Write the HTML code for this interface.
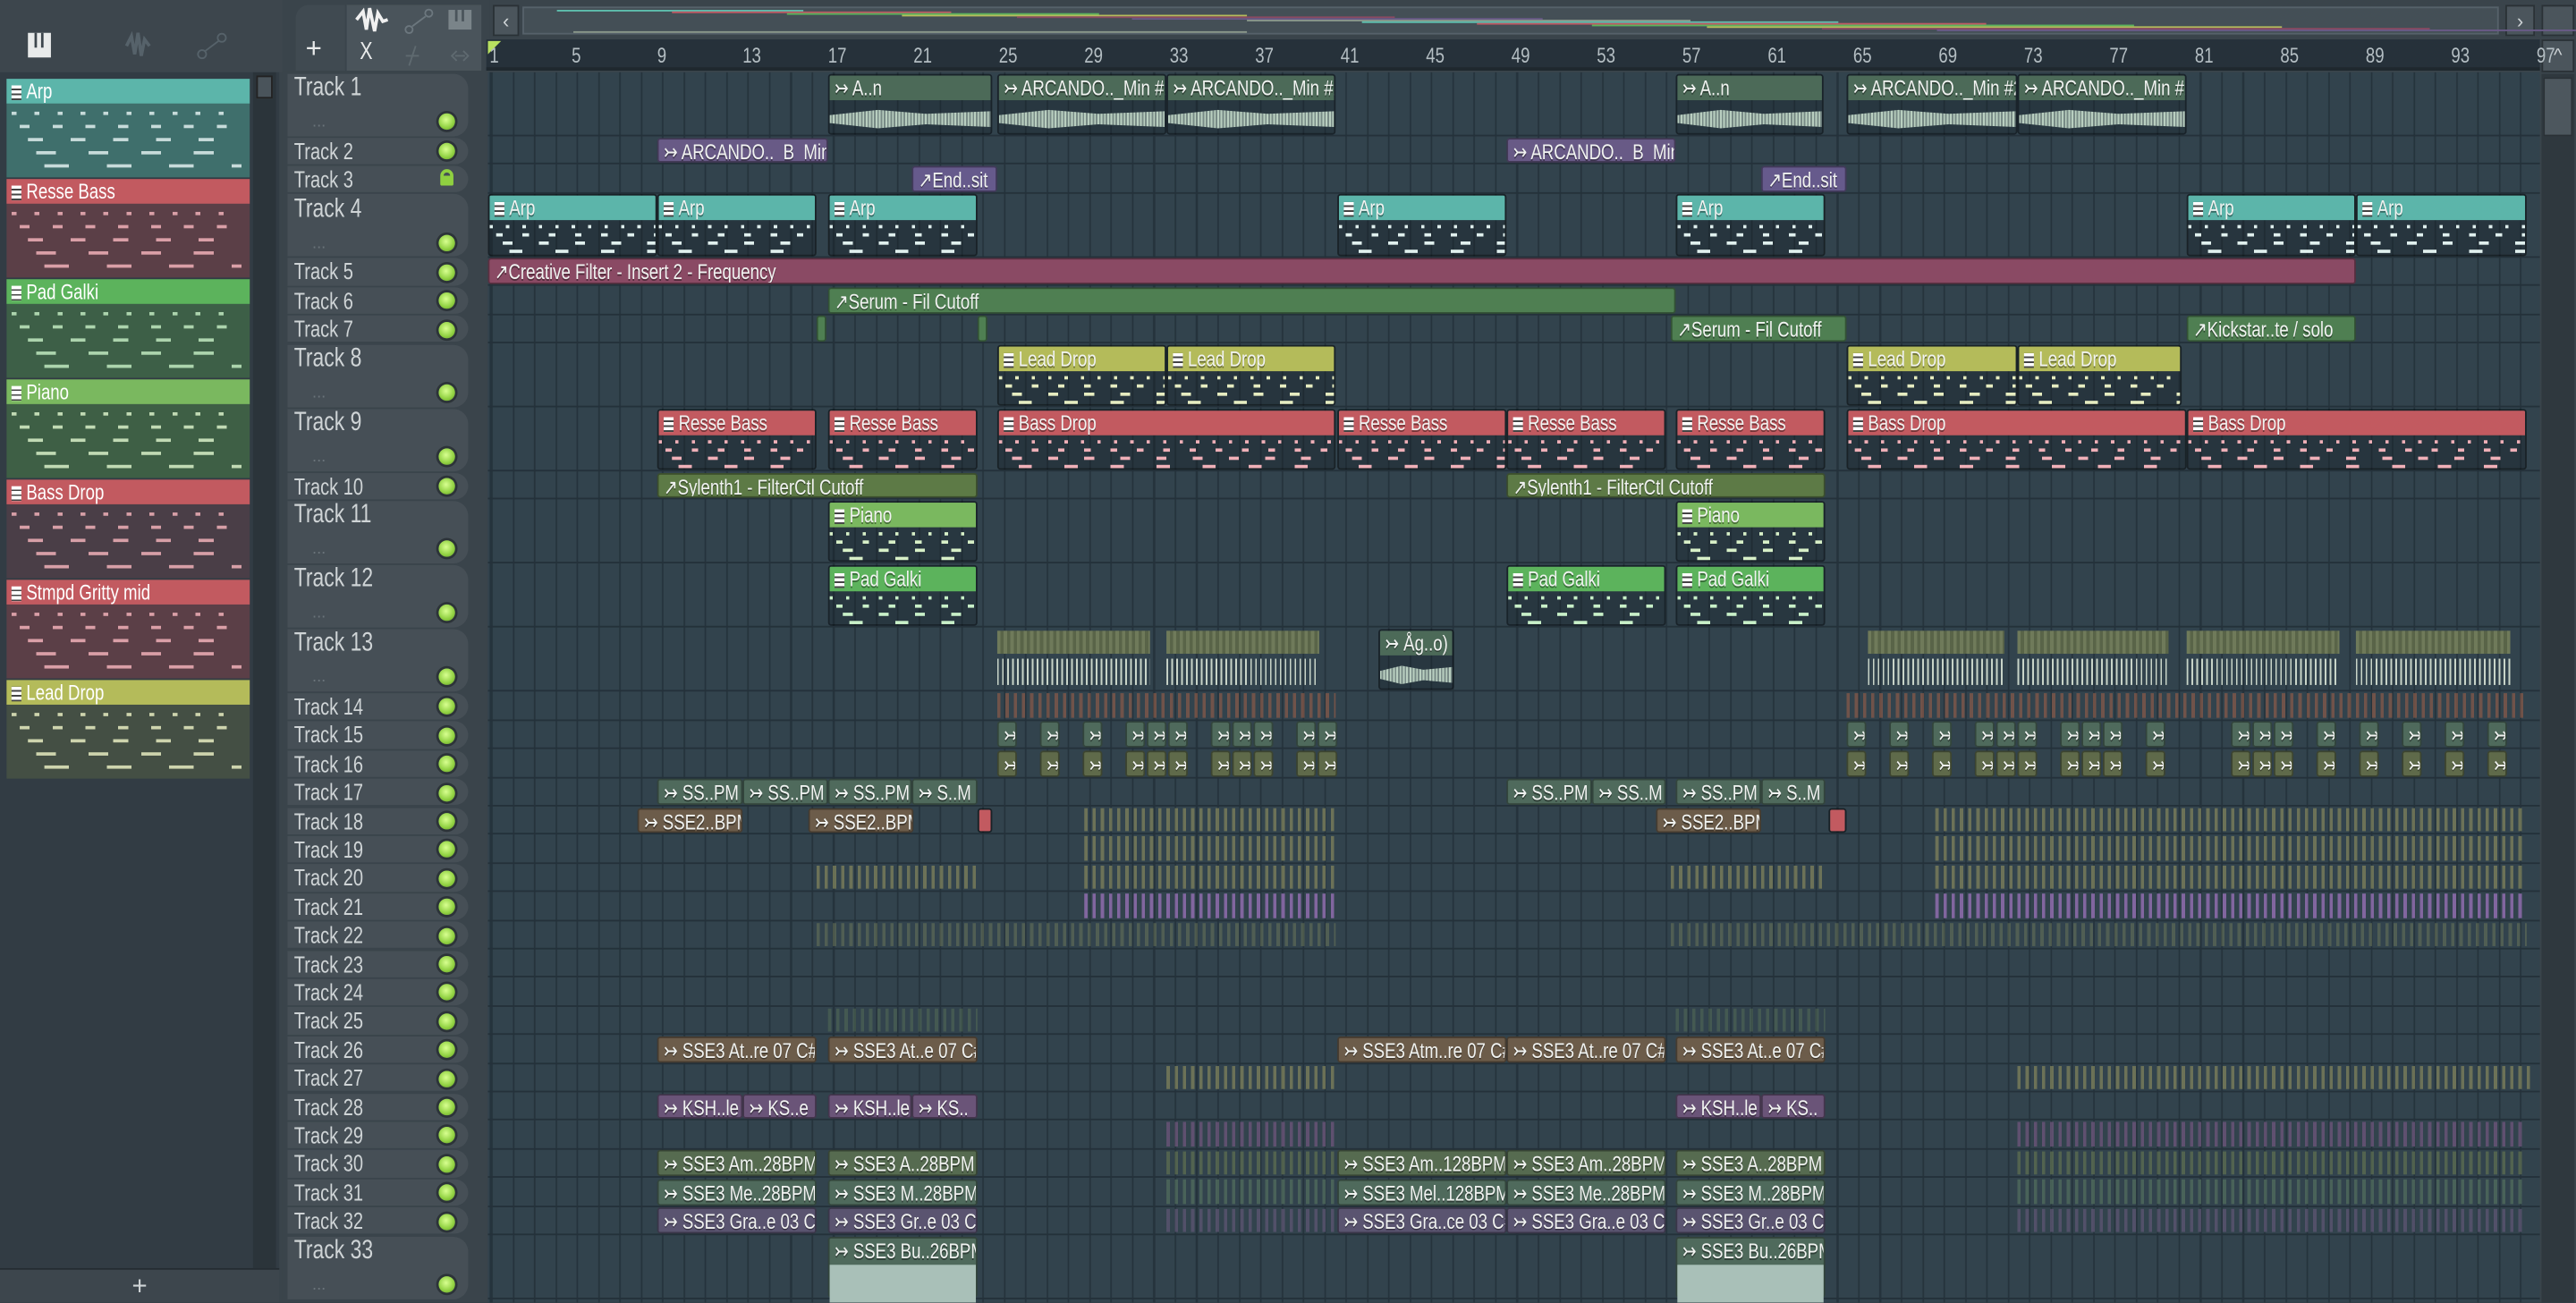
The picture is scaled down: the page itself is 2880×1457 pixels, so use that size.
<!DOCTYPE html>
<html><head><meta charset="utf-8">
<style>
html,body{margin:0;padding:0;width:2880px;height:1456px;overflow:hidden;background:#343e46;}
#s{position:absolute;left:0;top:0;width:1568px;height:793px;transform:scale(1.836735);transform-origin:0 0;background:#3a444b;font-family:"Liberation Sans",sans-serif;color:#e6eaea;overflow:hidden}
.a{position:absolute;box-sizing:border-box}
.t{display:inline-block;transform:scaleX(.78);transform-origin:0 50%;white-space:nowrap}
.tl{position:absolute;left:179px;color:#cfd4d6;white-space:nowrap}
.led{position:absolute;left:267px;width:10px;height:10px;border-radius:50%;background:radial-gradient(circle at 45% 40%,#d8ff90,#8fd040 60%,#5a8a28);box-shadow:0 0 0 1.5px #2c3338}
.c{position:absolute;box-sizing:border-box;border-radius:2px;overflow:hidden;border:1px solid rgba(0,0,0,.35)}
.h{position:absolute;left:0;right:0;top:0;height:15px;font-size:13px;line-height:15px;padding-left:3px;white-space:nowrap;overflow:hidden;color:#f0f2f0;text-shadow:0 1px 0 rgba(0,0,0,.4)}
.pi{display:inline-block;width:6px;height:9px;margin-right:3px;vertical-align:-1px;background:repeating-linear-gradient(#fff 0 2px,#444 2px 3px)}
.num{position:absolute;top:26px;font-size:13px;color:#b4bec3}
</style></head><body>
<div id="s">
<div class="a" style="left:0;top:0;width:172px;height:44px;background:#3d464d"></div>
<svg class="a" style="left:15px;top:19px" width="130" height="18">
<rect x="2" y="1" width="14" height="15" fill="#e8eaea"/><rect x="6" y="1" width="1.5" height="9" fill="#3d464d"/><rect x="10" y="1" width="1.5" height="9" fill="#3d464d"/>
<path d="M62 9 L65 3 L67 14 L69 1 L71 15 L73 5 L76 9" stroke="#56626a" stroke-width="2" fill="none"/>
<circle cx="108" cy="14" r="2.5" stroke="#56626a" fill="none"/><circle cx="120" cy="4" r="2.5" stroke="#56626a" fill="none"/><path d="M110 12 L118 6" stroke="#56626a"/>
</svg>
<div class="a" style="left:0;top:44px;width:170px;height:729px;background:#323c44"></div>
<div class="a" style="left:154px;top:44px;width:14px;height:729px;background:#2b343a"></div>
<div class="a" style="left:156px;top:46px;width:10px;height:14px;background:#4a545b;border:1px solid #222"></div>
<div class="a" style="left:0;top:772px;width:170px;height:21px;background:#3d464d;border-top:1px solid #252d33;text-align:center;font-size:16px;color:#cfd4d6;line-height:21px">+</div>
<div id="pats"></div>
<div class="a" style="left:172px;top:0;width:126px;height:44px;background:#3a444b"></div>
<div class="a" style="left:180px;top:3px;width:30px;height:40px;background:#404a51;border-radius:8px 0 0 0"></div>
<div class="a" style="left:211px;top:3px;width:82px;height:40px;background:#4a545b"></div>
<div class="a" style="left:186px;top:20px;font-size:17px;color:#e8eaea">+</div>
<div class="a" style="left:219px;top:23px;font-size:15px;color:#e8eaea"><span class="t">X</span></div>
<svg class="a" style="left:213px;top:4px" width="80" height="38">
<path d="M4 8 L8 3 L10 14 L12 1 L15 15 L17 4 L20 9 L23 8" stroke="#f0f0f0" stroke-width="2" fill="none"/>
<circle cx="36" cy="14" r="2.2" stroke="#6c777e" fill="none"/><circle cx="48" cy="4" r="2.2" stroke="#6c777e" fill="none"/><path d="M38 12 L46 6" stroke="#6c777e"/>
<rect x="60" y="2" width="14" height="12" fill="#7a8489"/><rect x="64" y="2" width="1.5" height="7" fill="#4a545b"/><rect x="68" y="2" width="1.5" height="7" fill="#4a545b"/>
<path d="M40 24 L36 36 M34 30 L42 30" stroke="#5f6a70" fill="none"/><path d="M64 30 L70 30 M65 27 L62 30 L65 33 M69 27 L72 30 L69 33" stroke="#5f6a70" fill="none"/>
</svg>
<div class="a" style="left:298px;top:0;width:1270px;height:24px;background:#3a444b"></div>
<div class="a" style="left:300px;top:3px;width:16px;height:19px;background:#4b555c;border:1px solid #2a3136;color:#cfd4d6;font-size:12px;text-align:center;line-height:18px">&lsaquo;</div>
<div class="a" style="left:1525px;top:3px;width:18px;height:19px;background:#4b555c;border:1px solid #2a3136;color:#cfd4d6;font-size:12px;text-align:center;line-height:18px">&rsaquo;</div>
<div class="a" style="left:1547px;top:3px;width:20px;height:19px;background:#4b555c;border:1px solid #2a3136"></div>
<div class="a" style="left:318px;top:4px;width:1203px;height:17px;background:#444f56;border:1px solid #56616a" id="ov"></div>
<div class="a" style="left:296px;top:24px;width:1250px;height:19px;background:#26313a;border-bottom:2px solid #1f282e"></div>
<div class="a" style="left:297px;top:25px;width:0;height:0;border-left:8px solid #b8e060;border-bottom:8px solid transparent"></div>
<div class="a" style="left:1547px;top:24px;width:20px;height:20px;background:#4b555c;border:1px solid #2a3136;color:#cfd4d6;font-size:11px;text-align:center;line-height:18px">^</div>
<div class="a" style="left:1547px;top:45px;width:20px;height:748px;background:#2f383e"></div>
<div class="a" style="left:1548px;top:47px;width:18px;height:36px;background:#4d575e;border:1px solid #2a3136"></div>
<div id="rul"></div>
<div class="a" style="left:172px;top:44px;width:124px;height:749px;background:#3a444b"></div>
<div class="a" id="pl" style="left:297px;top:44px;width:1249px;height:749px;background-color:#32434d;background-image:repeating-linear-gradient(90deg,#25333c 0 1px,transparent 1px 13px);background-position:2px 0"></div>
<div id="tr"></div>
<div id="cl"></div>
</div>
<script>
var H=[39,17.4,17.4,39,17.4,17.4,17.4,39,39,17.4,39,39,39];for(var i=0;i<19;i++)H.push(17.4);H.push(39);
var T=[],y=44;for(i=0;i<H.length;i++){T.push(y);y+=H[i];}
var tr='',k;
for(i=0;i<H.length;i++){var t=T[i],h=H[i],tall=h>20;
tr+='<div class="a" style="left:175px;top:'+(t+0.5)+'px;width:110px;height:'+(h-1)+'px;background:#464f56;border-radius:0 9px 9px 0"></div>';
tr+='<div class="a" style="left:297px;top:'+(t+h-1)+'px;width:1249px;height:1px;background:#24313a"></div>';
tr+='<div class="tl" style="top:'+(t+(tall?1:0.5))+'px;font-size:'+(tall?16:14)+'px"><span class="t">Track '+(i+1)+'</span></div>';
if(tall)tr+='<div class="a" style="left:190px;top:'+(t+h-14)+'px;font-size:10px;color:#6a747a">...</div>';
if(i==2)tr+='<div class="a" style="left:268px;top:'+(t+3)+'px;width:8px;height:10px;border:2px solid #8fd040;border-bottom:6px solid #8fd040;border-radius:4px 4px 1px 1px"></div>';
else tr+='<div class="led" style="top:'+(t+h-(tall?14:13.5))+'px"></div>';}
document.getElementById('tr').innerHTML=tr;
var r='';for(var n=1;n<=97;n+=4){var x=299+(n-1)*13;r+='<div class="num" style="left:'+(x+(n==1?-1:-3))+'px"><span class="t">'+n+'</span></div>';}
document.getElementById('rul').innerHTML=r;
var ov='',oc=['#5fc0b0','#c05a64','#5cb35c','#b6bd5c','#8a4a62','#6a5a88','#8c9a8c'];
for(i=0;i<14;i++){ov+='<div class="a" style="left:'+(20+i*70%900)+'px;top:'+(1+i)+'px;width:'+(150+i*20)+'px;height:1px;background:'+oc[i%7]+'"></div>';}
document.getElementById('ov').innerHTML=ov;
var P=[['Arp','#5cb5aa','#3f6f6c','#dfeeee'],['Resse Bass','#c25a60','#5b3f47','#f0b0b8'],['Pad Galki','#5cb35c','#3d5f47','#bfe8bf'],['Piano','#7ab85f','#3e5f45','#d8f0c8'],['Bass Drop','#c25a60','#4a3e47','#f0b0b8'],['Stmpd Gritty mid','#c25a60','#5b3f47','#f0b0b8'],['Lead Drop','#b4bb5a','#444f44','#e6ecc0']];
var p='';for(i=0;i<P.length;i++){var py=48+i*61;
p+='<div class="a" style="left:4px;top:'+py+'px;width:148px;height:60px;background:'+P[i][2]+';overflow:hidden">';
for(k=0;k<5;k++)p+='<div class="a" style="left:'+(3+k*5)+'px;top:'+(20+k*8)+'px;width:'+(140-k*5)+'px;height:2px;background:repeating-linear-gradient(90deg,'+P[i][3]+' 0 '+(3+k*3)+'px,transparent '+(3+k*3)+'px '+(14+k*6)+'px);opacity:.85"></div>';
p+='</div><div class="a" style="left:4px;top:'+py+'px;width:148px;height:15px;background:'+P[i][1]+';font-size:13px;line-height:15px;padding-left:3px;color:#fff"><span class="pi"></span><span class="t">'+P[i][0]+'</span></div>';}
document.getElementById('pats').innerHTML=p;
var cl='';
var COL={arp:['#5cb5aa','rgba(20,30,35,.35)','#e0f0ee'],res:['#c25a60','rgba(20,30,35,.35)','#f0b0b8'],pad:['#5cb35c','rgba(20,30,35,.3)','#c8f0c8'],pia:['#7ab85f','rgba(20,30,35,.3)','#d8f0c8'],lead:['#b4bb5a','rgba(20,30,35,.35)','#e6ecc0'],aud:['#4c6a58','rgba(20,30,35,.3)','#b9cfc0'],arc:['#685a86','#685a86',''],end:['#665a8c','#665a8c',''],cf:['#8a4a64','#8a4a64',''],ser:['#4f7f52','#4f7f52',''],syl:['#5d7a46','#5d7a46',''],ss:['#4f6a5c','#4f6a5c',''],br:['#6c5c4a','#6c5c4a',''],ksh:['#6a5478','#6a5478',''],am:['#566b50','#566b50',''],gr:['#5a5470','#5a5470',''],ol:['#5f6a4a','#5f6a4a','']};
function C(t,x1,x2,l,c,ic){var h=H[t-1],top=T[t-1],co=COL[c];var tall=h>20;
var s='<div class="c" style="left:'+x1+'px;top:'+(top+0.5)+'px;width:'+(x2-x1)+'px;height:'+(h-1.5)+'px;background:'+co[1]+'">';
if(l!==null)s+='<div class="h" style="background:'+co[0]+'">'+(ic=='p'?'<span class="pi"></span>':'')+'<span class="t">'+(ic=='a'?'&#8611; ':ic=='m'?'&#8599;':'')+l+'</span></div>';
if(tall&&co[2]){ if(c=='aud'){s+='<div class="a" style="left:0;right:0;top:19px;height:16px;background:repeating-linear-gradient(90deg,'+co[2]+' 0 1px,rgba(185,207,192,.55) 1px 2px);clip-path:polygon(0 35%,30% 15%,60% 30%,100% 20%,100% 80%,60% 70%,30% 85%,0 65%)"></div>';}
else for(k=0;k<4;k++)s+='<div class="a" style="left:'+(k*4)+'px;right:0;top:'+(18+k*5)+'px;height:2px;background:repeating-linear-gradient(90deg,'+co[2]+' 0 '+(2+k*2)+'px,transparent '+(2+k*2)+'px '+(10+k*6)+'px)"></div>';}
s+='</div>';cl+=s;}
function S(t,x1,x2,col,op){var h=H[t-1],top=T[t-1];cl+='<div class="a" style="left:'+x1+'px;top:'+(top+1)+'px;width:'+(x2-x1)+'px;height:'+(h-3)+'px;background:repeating-linear-gradient(90deg,'+col+' 0 2px,transparent 2px 5px);opacity:'+(op||0.8)+'"></div>';}
C(1,504,604,'A..n','aud','a');C(1,607,710,'ARCANDO.._Min #2','aud','a');C(1,710,813,'ARCANDO.._Min #2','aud','a');
C(1,1020,1110,'A..n','aud','a');C(1,1124,1228,'ARCANDO.._Min #2','aud','a');C(1,1228,1331,'ARCANDO.._Min #2','aud','a');
C(2,400,504,'ARCANDO.._B_Min','arc','a');C(2,917,1020,'ARCANDO.._B_Min','arc','a');
C(3,555,607,'End..sit','end','m');C(3,1072,1124,'End..sit','end','m');
C(4,297,400,'Arp','arp','p');C(4,400,497,'Arp','arp','p');C(4,504,595,'Arp','arp','p');C(4,814,917,'Arp','arp','p');C(4,1020,1111,'Arp','arp','p');C(4,1331,1434,'Arp','arp','p');C(4,1434,1538,'Arp','arp','p');
C(5,297,1434,'Creative Filter - Insert 2 - Frequency','cf','m');
C(6,504,1020,'Serum - Fil Cutoff','ser','m');
C(7,497,503,'','ser','');C(7,595,601,'','ser','');C(7,1017,1124,'Serum - Fil Cutoff','ser','m');C(7,1331,1434,'Kickstar..te / solo','ser','m');
C(8,607,710,'Lead Drop','lead','p');C(8,710,813,'Lead Drop','lead','p');C(8,1124,1228,'Lead Drop','lead','p');C(8,1228,1328,'Lead Drop','lead','p');
C(9,400,497,'Resse Bass','res','p');C(9,504,595,'Resse Bass','res','p');C(9,607,813,'Bass Drop','res','p');C(9,814,917,'Resse Bass','res','p');C(9,917,1014,'Resse Bass','res','p');C(9,1020,1111,'Resse Bass','res','p');C(9,1124,1331,'Bass Drop','res','p');C(9,1331,1538,'Bass Drop','res','p');
C(10,400,595,'Sylenth1 - FilterCtl Cutoff','syl','m');C(10,917,1111,'Sylenth1 - FilterCtl Cutoff','syl','m');
C(11,504,595,'Piano','pia','p');C(11,1020,1111,'Piano','pia','p');
C(12,504,595,'Pad Galki','pad','p');C(12,917,1014,'Pad Galki','pad','p');C(12,1020,1111,'Pad Galki','pad','p');
C(13,839,885,'Åg..o)','aud','a');
[[607,700],[710,803],[1137,1220],[1228,1320],[1331,1424],[1434,1528]].forEach(function(a){cl+='<div class="a" style="left:'+a[0]+'px;top:'+(T[12]+2)+'px;width:'+(a[1]-a[0])+'px;height:14px;background:repeating-linear-gradient(90deg,#6f7a5a 0 2px,#596448 2px 4px)"></div><div class="a" style="left:'+a[0]+'px;top:'+(T[12]+19)+'px;width:'+(a[1]-a[0])+'px;height:16px;background:repeating-linear-gradient(90deg,#c8d4c8 0 1px,transparent 1px 3px)"></div>';});
S(14,607,813,'#8a5a48',.7);S(14,1124,1538,'#8a5a48',.7);
var X1=[607,633,659,685,698,711,737,750,763,789,802],X2=[1124,1150,1176,1202,1215,1228,1254,1267,1280,1306,1358,1371,1384,1410,1436,1462,1488,1514];
X1.concat(X2).forEach(function(x){C(15,x,x+12,'','ss','a');C(16,x,x+12,'','ol','a');});
C(17,400,452,'SS..PM','ss','a');C(17,452,504,'SS..PM','ss','a');C(17,504,555,'SS..PM','ss','a');C(17,555,595,'S..M','ss','a');C(17,917,969,'SS..PM','ss','a');C(17,969,1014,'SS..M','ss','a');C(17,1020,1072,'SS..PM','ss','a');C(17,1072,1111,'S..M','ss','a');
C(18,388,452,'SSE2..BPM','br','a');C(18,492,556,'SSE2..BPM','br','a');C(18,595,604,'','res','');C(18,1008,1072,'SSE2..BPM','br','a');C(18,1113,1124,'','res','');
S(18,660,813,'#7a7e5a');S(18,1178,1538,'#7a7e5a');S(19,660,813,'#7a7e5a');S(19,1178,1538,'#7a7e5a');
S(20,497,595,'#7a7e5a');S(20,660,813,'#7a7e5a');S(20,1017,1111,'#7a7e5a');S(20,1178,1538,'#7a7e5a');
S(21,660,813,'#8a6aa8',.9);S(21,1178,1538,'#8a6aa8',.9);
S(22,497,813,'#6f7a5a',.5);S(22,1017,1538,'#6f7a5a',.5);
S(25,504,595,'#5f7a5a',.4);S(25,1020,1111,'#5f7a5a',.4);
C(26,400,497,'SSE3 At..re 07 C#','br','a');C(26,504,595,'SSE3 At..e 07 C#','br','a');C(26,814,917,'SSE3 Atm..re 07 C#','br','a');C(26,917,1014,'SSE3 At..re 07 C#','br','a');C(26,1020,1111,'SSE3 At..e 07 C#','br','a');
S(27,710,813,'#7a7e5a');S(27,1228,1540,'#7a7e5a');
C(28,400,452,'KSH..le','ksh','a');C(28,452,497,'KS..e','ksh','a');C(28,504,555,'KSH..le','ksh','a');C(28,555,595,'KS..','ksh','a');C(28,1020,1072,'KSH..le','ksh','a');C(28,1072,1111,'KS..','ksh','a');
S(29,710,813,'#6a5478');S(29,1228,1538,'#6a5478');S(30,710,813,'#5a6b50');S(30,1228,1538,'#5a6b50');S(31,710,813,'#4f6a5c');S(31,1228,1538,'#4f6a5c');S(32,710,813,'#5a5470');S(32,1228,1538,'#5a5470');
C(30,400,497,'SSE3 Am..28BPM','am','a');C(30,504,595,'SSE3 A..28BPM','am','a');C(30,814,917,'SSE3 Am..128BPM','am','a');C(30,917,1014,'SSE3 Am..28BPM','am','a');C(30,1020,1111,'SSE3 A..28BPM','am','a');
C(31,400,497,'SSE3 Me..28BPM','ss','a');C(31,504,595,'SSE3 M..28BPM','ss','a');C(31,814,917,'SSE3 Mel..128BPM','ss','a');C(31,917,1014,'SSE3 Me..28BPM','ss','a');C(31,1020,1111,'SSE3 M..28BPM','ss','a');
C(32,400,497,'SSE3 Gra..e 03 C#','gr','a');C(32,504,595,'SSE3 Gr..e 03 C#','gr','a');C(32,814,917,'SSE3 Gra..ce 03 C#','gr','a');C(32,917,1014,'SSE3 Gra..e 03 C#','gr','a');C(32,1020,1111,'SSE3 Gr..e 03 C#','gr','a');
C(33,504,595,'SSE3 Bu..26BPM','ss','a');C(33,1020,1111,'SSE3 Bu..26BPM','ss','a');
cl+='<div class="a" style="left:505px;top:770px;width:89px;height:23px;background:#a9c0b8"></div><div class="a" style="left:1021px;top:770px;width:89px;height:23px;background:#a9c0b8"></div>';
document.getElementById('cl').innerHTML=cl;
</script>
</body></html>
